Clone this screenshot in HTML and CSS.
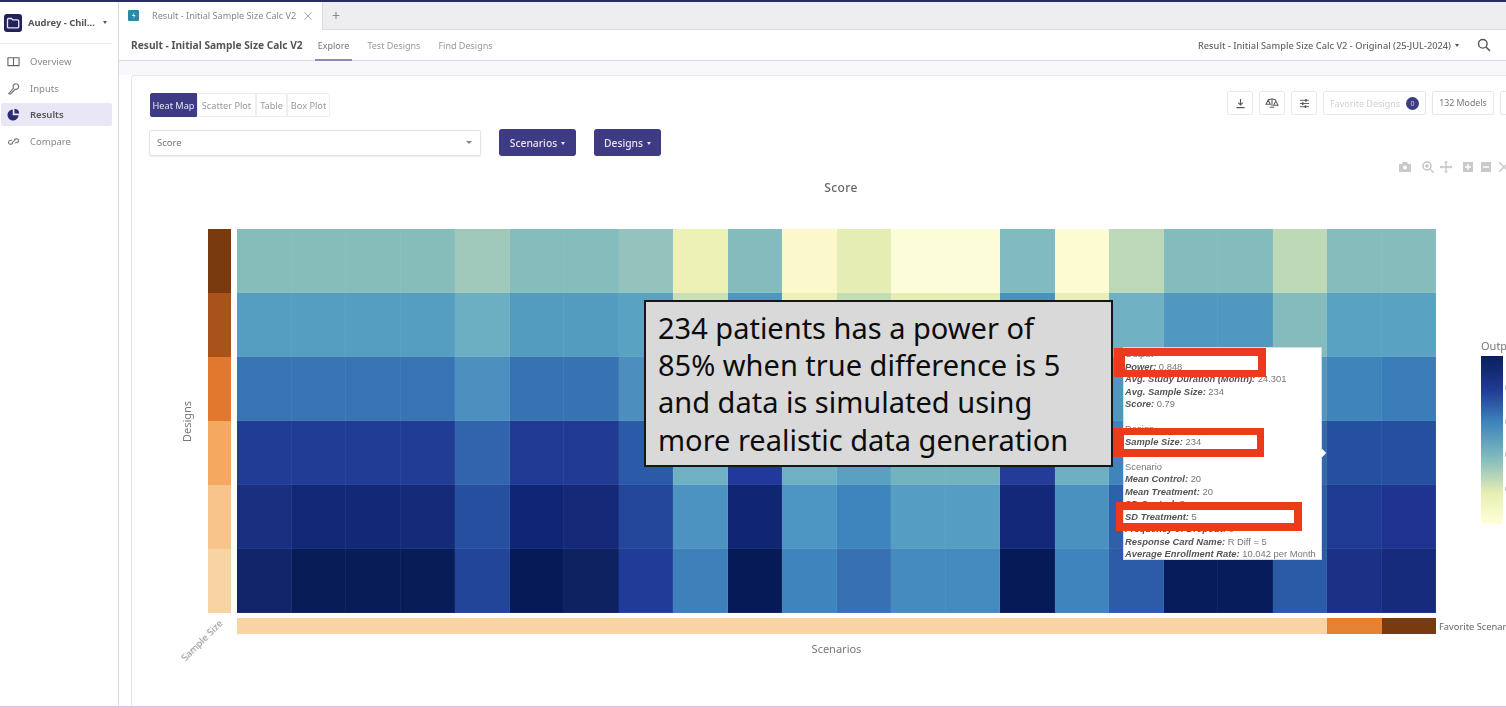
FILE: index.html
```html
<!DOCTYPE html>
<html lang="en">
<head>
<meta charset="utf-8">
<title>Result - Initial Sample Size Calc V2</title>
<link rel="stylesheet" href="styles.css">
</head>
<body>
<div class="app">
  <aside class="sidebar soft">
    <div class="workspace">
      <span class="logo"><svg viewBox="0 0 18 18" width="18" height="18"><rect width="18" height="18" rx="3" fill="#23215c"/><path d="M3.5 5.5q0-1 1-1h3l1.2 1.4h5q1 0 1 1v6q0 1-1 1h-9.200q-1 0-1-1z" fill="none" stroke="#e8e8f2" stroke-width="1.300"/></svg></span>
      <span class="workspace-name">Audrey - Chil...</span>
      <span class="caret dark"></span>
    </div>
    <nav class="nav">
      <a class="nav-item"><svg viewBox="0 0 14 14" width="13" height="13"><path d="M1 3h12v8.500H1zM7 3v8.500" fill="none" stroke="#666" stroke-width="1.200"/></svg>Overview</a>
      <a class="nav-item"><svg viewBox="0 0 14 14" width="13" height="13"><path d="M2 12.500l5-6a3 3 0 1 1 1.800 1.300l-5 5.200z" fill="none" stroke="#777" stroke-width="1.300"/></svg>Inputs</a>
      <a class="nav-item active"><svg viewBox="0 0 14 14" width="13" height="13"><path d="M6.200 1.500v6.300h6.300a6 6 0 1 1-6.300-6.300zM8 .8a5.500 5.500 0 0 1 5.200 5.200H8z" fill="#2f2b70"/></svg>Results</a>
      <a class="nav-item"><svg viewBox="0 0 14 14" width="13" height="13"><path d="M6 9H3.500a2 2 0 0 1 0-4H6M8 9h2.500a2 2 0 0 0 0-4H8M5 8l4-2" fill="none" stroke="#777" stroke-width="1.200" transform="rotate(-15 7 7)"/></svg>Compare</a>
    </nav>
  </aside>

  <main class="main">
    <div class="tabs soft">
      <div class="tab">
        <span class="tab-icon"><svg viewBox="0 0 11 11" width="11" height="11"><path d="M6.500 2L4 6h2l-1 3 2.500-4h-2z" fill="#dff"/></svg></span>
        <span class="tab-label">Result - Initial Sample Size Calc V2</span>
        <svg class="tab-close" viewBox="0 0 8 8" width="8" height="8"><path d="M.5.500l7 7M7.500.500l-7 7" stroke="#999" stroke-width=".9"/></svg>
      </div>
      <span class="tab-add">+</span>
    </div>

    <header class="titlebar soft">
      <h1 class="page-title">Result - Initial Sample Size Calc V2</h1>
      <a class="subnav current">Explore</a>
      <a class="subnav">Test Designs</a>
      <a class="subnav">Find Designs</a>
      <span class="version">Result - Initial Sample Size Calc V2 - Original (25-JUL-2024)<span class="caret dark small"></span></span>
      <svg class="search" viewBox="0 0 14 14" width="14" height="14"><circle cx="5.800" cy="5.800" r="4.300" fill="none" stroke="#555" stroke-width="1.400"/><path d="M9 9l4 4" stroke="#555" stroke-width="1.600"/></svg>
    </header>

    <div class="canvas">
      <section class="card">
        <div class="controls soft">
          <div class="controls-left">
            <div class="segments">
              <span class="segment on">Heat Map</span>
              <span class="segment wide">Scatter Plot</span>
              <span class="segment narrow">Table</span>
              <span class="segment last">Box Plot</span>
            </div>
            <div class="filters">
              <div class="select"><span>Score</span><span class="caret grey"></span></div>
              <button class="btn first">Scenarios<span class="caret light"></span></button>
              <button class="btn second">Designs<span class="caret light"></span></button>
            </div>
          </div>
          <div class="controls-right">
            <span class="tool"><svg viewBox="0 0 12 12" width="11" height="11"><path d="M6 1v6.500M3.500 5L6 7.500 8.500 5M1.500 10.500h9" fill="none" stroke="#555" stroke-width="1.200"/></svg></span>
            <span class="tool"><svg viewBox="0 0 16 14" width="14" height="12"><path d="M8 1.500v9M3.500 3.500L8 2l4.500 1.500M3.500 3.500L1 8.500h5zM12.500 4.500L10 9.500h5zM5.500 12h5" fill="none" stroke="#555" stroke-width="1.200"/></svg></span>
            <span class="tool"><svg viewBox="0 0 12 12" width="11" height="11"><path d="M1 2.500h10M1 6h10M1 9.500h10" stroke="#555" stroke-width="1"/><path d="M7.500 1v3M4 4.500v3M7 8v3" stroke="#555" stroke-width="1.600"/></svg></span>
            <span class="tool fav">Favorite Designs<span class="count">0</span></span>
            <span class="tool models">132 Models</span>
            <span class="tool clipped"></span>
          </div>
        </div>

        <div class="modebar soft">
          <svg viewBox="0 0 12 10" width="12" height="10"><path d="M0 2h3l1-2h4l1 2h3v8H0z" fill="#c9c9c9"/><circle cx="6" cy="5.500" r="2" fill="#fff"/></svg>
          <svg class="gap-l" viewBox="0 0 12 12" width="12" height="12"><circle cx="5" cy="5" r="4" fill="none" stroke="#c4c4c4" stroke-width="1.500"/><path d="M8 8l4 4M3 5h4M5 3v4" stroke="#c4c4c4" stroke-width="1.300"/></svg>
          <svg class="gap-s" viewBox="0 0 12 12" width="12" height="12"><path d="M6 0v12M0 6h12" stroke="#c4c4c4" stroke-width="1.300"/><path d="M4.500 2L6 .5 7.500 2M4.500 10L6 11.500 7.500 10M2 4.500L.5 6 2 7.500M10 4.500L11.500 6 10 7.500" fill="none" stroke="#c4c4c4"/></svg>
          <svg class="gap-l" viewBox="0 0 10 10" width="10" height="10"><rect width="10" height="10" fill="#c9c9c9"/><path d="M5 2v6M2 5h6" stroke="#fff" stroke-width="1.400"/></svg>
          <svg class="gap-m" viewBox="0 0 10 10" width="10" height="10"><rect width="10" height="10" fill="#c9c9c9"/><path d="M2 5h6" stroke="#fff" stroke-width="1.400"/></svg>
          <svg class="gap-m" viewBox="0 0 10 10" width="10" height="10"><path d="M0 0l5 5-5 5M10 0L5 5l5 5" fill="none" stroke="#c9c9c9" stroke-width="1.400"/></svg>
        </div>

        <h2 class="chart-title soft">Score</h2>

        <div class="chart">
          <div class="axis-designs soft"><span>Designs</span></div>
          <div class="design-bar soft">
            <i class="d1"></i><i class="d2"></i><i class="d3"></i><i class="d4"></i><i class="d5"></i><i class="d6"></i>
          </div>
          <div class="plot">
            <div class="heatmap soft">
              <i style="background:#86bdbb"></i><i style="background:#86bdbb"></i><i style="background:#86bdbb"></i><i style="background:#86bdbb"></i><i style="background:#9fc8ba"></i><i style="background:#85bcbc"></i><i style="background:#85bcbc"></i><i style="background:#93c3bc"></i><i style="background:#eef1b5"></i><i style="background:#84bcbe"></i><i style="background:#fbf9cb"></i><i style="background:#e5ecb4"></i><i style="background:#fdfcd8"></i><i style="background:#fdfcd8"></i><i style="background:#82bbbf"></i><i style="background:#fdfbd2"></i><i style="background:#bcd8b8"></i><i style="background:#84bcbe"></i><i style="background:#84bcbe"></i><i style="background:#bdd9b6"></i><i style="background:#86bcbc"></i><i style="background:#86bcbc"></i>
              <i style="background:#559dc1"></i><i style="background:#559dc1"></i><i style="background:#559dc1"></i><i style="background:#559dc1"></i><i style="background:#6cafc3"></i><i style="background:#539cc0"></i><i style="background:#539cc0"></i><i style="background:#5aa2c1"></i><i style="background:#c9dfb5"></i><i style="background:#4f97bf"></i><i style="background:#ecf0b8"></i><i style="background:#c5ddb4"></i><i style="background:#e6eeb5"></i><i style="background:#e6eeb5"></i><i style="background:#4793bf"></i><i style="background:#e8efb6"></i><i style="background:#6fb0c3"></i><i style="background:#5098c0"></i><i style="background:#5098c0"></i><i style="background:#84bcbe"></i><i style="background:#5aa2c1"></i><i style="background:#5aa2c1"></i>
              <i style="background:#3873b3"></i><i style="background:#3873b3"></i><i style="background:#3873b3"></i><i style="background:#3873b3"></i><i style="background:#4c90c0"></i><i style="background:#3773b2"></i><i style="background:#3773b2"></i><i style="background:#4c8fbf"></i><i style="background:#84bcbe"></i><i style="background:#2f60aa"></i><i style="background:#84bcbe"></i><i style="background:#6fb0c3"></i><i style="background:#84bcbe"></i><i style="background:#84bcbe"></i><i style="background:#2f60aa"></i><i style="background:#84bcbe"></i><i style="background:#4f97bf"></i><i style="background:#3873b3"></i><i style="background:#3873b3"></i><i style="background:#4f97bf"></i><i style="background:#3f85bc"></i><i style="background:#3b7db8"></i>
              <i style="background:#203c95"></i><i style="background:#203c95"></i><i style="background:#203c95"></i><i style="background:#203c95"></i><i style="background:#3164ac"></i><i style="background:#213b94"></i><i style="background:#213b94"></i><i style="background:#2b5aa8"></i><i style="background:#6fb0c3"></i><i style="background:#22389a"></i><i style="background:#6fb1c3"></i><i style="background:#5aa1c1"></i><i style="background:#72b3be"></i><i style="background:#72b3be"></i><i style="background:#243c98"></i><i style="background:#6eb0c2"></i><i style="background:#3f85bc"></i><i style="background:#213b94"></i><i style="background:#213b94"></i><i style="background:#3366ad"></i><i style="background:#25509f"></i><i style="background:#25509f"></i>
              <i style="background:#1a2f80"></i><i style="background:#112876"></i><i style="background:#132877"></i><i style="background:#152b7a"></i><i style="background:#26509f"></i><i style="background:#102575"></i><i style="background:#152978"></i><i style="background:#24479c"></i><i style="background:#4d93c1"></i><i style="background:#102672"></i><i style="background:#4d95c2"></i><i style="background:#3f85bd"></i><i style="background:#559dc2"></i><i style="background:#559dc2"></i><i style="background:#132878"></i><i style="background:#4a91c0"></i><i style="background:#2f60aa"></i><i style="background:#132878"></i><i style="background:#132878"></i><i style="background:#2b5ca8"></i><i style="background:#1f3a92"></i><i style="background:#1f3490"></i>
              <i style="background:#12256b"></i><i style="background:#081c58"></i><i style="background:#081c58"></i><i style="background:#081c58"></i><i style="background:#224599"></i><i style="background:#061a58"></i><i style="background:#0e2160"></i><i style="background:#213c98"></i><i style="background:#3d80ba"></i><i style="background:#061a58"></i><i style="background:#3f84bc"></i><i style="background:#3871b3"></i><i style="background:#458bc0"></i><i style="background:#458bc0"></i><i style="background:#061a58"></i><i style="background:#3f84bc"></i><i style="background:#2c5ca8"></i><i style="background:#071c5b"></i><i style="background:#071c5b"></i><i style="background:#2b5aa6"></i><i style="background:#1b3186"></i><i style="background:#172b7c"></i>
            </div>
            <div class="scenario-bar soft"><i class="fill"></i><i class="s2"></i><i class="s3"></i></div>
            <div class="axis-scenarios soft">Scenarios</div>

            <div class="tooltip soft">
              <p>Output</p>
              <p><b>Power:</b> 0.848</p>
              <p><b>Avg. Study Duration (Month):</b> 24.301</p>
              <p><b>Avg. Sample Size:</b> 234</p>
              <p><b>Score:</b> 0.79</p>
              <p>&nbsp;</p>
              <p>Design</p>
              <p><b>Sample Size:</b> 234</p>
              <p>&nbsp;</p>
              <p>Scenario</p>
              <p><b>Mean Control:</b> 20</p>
              <p><b>Mean Treatment:</b> 20</p>
              <p><b>SD Control:</b> 5</p>
              <p><b>SD Treatment:</b> 5</p>
              <p><b>Frequency of Dropout:</b> 0</p>
              <p><b>Response Card Name:</b> R Diff = 5</p>
              <p><b>Average Enrollment Rate:</b> 10.042 per Month</p>
              <span class="tooltip-arrow"></span>
            </div>
            <span class="mark mark-power"></span>
            <span class="mark mark-size"></span>
            <span class="mark mark-sd"></span>
            <div class="callout">234 patients has a power of<br>85% when true difference is 5<br>and data is simulated using<br>more realistic data generation</div>
          </div>
          <div class="legend soft">
            <span class="legend-title">Output</span>
            <div class="legend-body">
              <div class="legend-ramp"></div>
              <div class="legend-ticks"><span>0.8</span><span>0.6</span><span>0.4</span><span>0.2</span></div>
            </div>
          </div>
          <span class="fav-label soft">Favorite Scenario</span>
          <span class="axis-sample soft">Sample Size</span>
        </div>
      </section>
    </div>
  </main>
</div>
</body>
</html>
```

FILE: styles.css
```css
* { box-sizing: border-box; }
html, body { margin: 0; height: 708px; overflow: hidden; background: #fff; }
body { font-family: "Noto Sans", "Open Sans", sans-serif; color: #666; }
.soft { filter: blur(0.45px); }

.app {
  display: flex;
  height: 708px;
  border-top: 2px solid #2b2a63;
  border-bottom: 2px solid #e9bfe2;
  overflow: hidden;
}

/* sidebar */
.sidebar {
  flex: 0 0 119px;
  border-right: 1px solid #d9d9e6;
  padding-right: 6px;
}
.workspace {
  display: flex;
  align-items: center;
  height: 42px;
  padding: 0 0 0 4px;
  border-bottom: 1px solid #eeeef2;
}
.logo { display: flex; margin-right: 6px; }
.workspace-name { font-size: 9.400px; font-weight: 700; color: #555; white-space: nowrap; }
.caret {
  display: inline-block;
  border-left: 2.500px solid transparent;
  border-right: 2.500px solid transparent;
  border-top: 3px solid #555;
}
.caret.dark { margin-left: 8px; }
.caret.small { margin-left: 4px; vertical-align: 2px; }
.caret.grey { border-top-color: #888; border-left-width: 3.500px; border-right-width: 3.500px; }
.caret.light { border-top-color: #e8e6f6; margin-left: 4px; vertical-align: 2px; }
.nav { display: flex; flex-direction: column; padding-top: 6px; gap: 3.500px; }
.nav-item {
  display: flex;
  align-items: center;
  gap: 10px;
  height: 23px;
  padding-left: 6px;
  margin-left: 1px;
  font-size: 9.500px;
  color: #888;
  border-radius: 2px;
}
.nav-item.active { background: #e9e7f5; color: #555; font-weight: 600; }

/* main */
.main { flex: 1; min-width: 0; display: flex; flex-direction: column; }
.tabs {
  display: flex;
  align-items: center;
  height: 28px;
  background: #eeeef1;
  border-bottom: 1px solid #dcdce6;
}
.tab {
  display: flex;
  align-items: center;
  width: 204px;
  height: 28px;
  padding-left: 9px;
  background: #fff;
  border-right: 1px solid #d9d9e0;
}
.tab-icon { display: flex; width: 11px; height: 11px; border-radius: 1px; background: #2f88a8; margin-right: 13px; }
.tab-label { font-size: 9.100px; color: #888; white-space: nowrap; }
.tab-close { margin-left: 8px; }
.tab-add { margin-left: 9px; font-size: 14px; color: #888; line-height: 1; }

.titlebar {
  display: flex;
  align-items: center;
  height: 31px;
  padding-left: 12px;
  border-bottom: 1px solid #d9d9e6;
  background: #fff;
}
.page-title { margin: 0 15px 0 0; font-size: 10.200px; font-weight: 700; color: #555; white-space: nowrap; }
.subnav { position: relative; font-size: 9px; color: #999; margin-right: 18px; white-space: nowrap; line-height: 31px; height: 30px; }
.subnav.current { color: #777; }
.subnav.current::after {
  content: "";
  position: absolute;
  left: -3px;
  right: -3px;
  bottom: -1px;
  height: 2px;
  background: #8f88b8;
}
.version { margin-left: auto; font-size: 9.250px; font-weight: 500; color: #666; white-space: nowrap; }
.search { margin: 0 15px 0 18px; }

.canvas { flex: 1; min-height: 0; padding: 14px 0 0 12px; background: linear-gradient(#f8f8fc 14px, #fff 14px); }
.card {
  width: 1400px;
  height: 640px;
  padding: 17px 0 0 18px;
  background: #fff;
  border: 1px solid #e5e5ee;
  border-radius: 3px;
}

/* controls */
.controls { display: flex; justify-content: space-between; height: 64px; margin-right: 24px; }
.controls-right { display: flex; gap: 6px; width: 279px; height: 24px; margin-top: -2px; white-space: nowrap; overflow: hidden; flex: none; }
.segments { display: flex; height: 24px; }
.segment {
  display: flex;
  align-items: center;
  justify-content: center;
  width: 43px;
  font-size: 9.200px;
  color: #999;
  border: 1px solid #eeeef2;
  white-space: nowrap;
}
.segment.on { width: 47px; background: #3f3a84; color: #e6e4f4; border-radius: 2px 0 0 2px; border-color: #3f3a84; }
.segment.wide { width: 59px; }
.segment.narrow { width: 31px; }
.segment.last { border-radius: 0 2px 2px 0; }
.filters { display: flex; align-items: center; margin: 12px 0 0 -1px; }
.select {
  display: flex;
  align-items: center;
  justify-content: space-between;
  width: 332px;
  height: 26px;
  padding: 0 8px 0 7px;
  font-size: 9.500px;
  color: #777;
  border: 1px solid #e2e2e8;
  border-radius: 2px;
  box-shadow: 0 1px 2px #eee;
}
.btn {
  height: 27px;
  font: 500 10.300px "Noto Sans", sans-serif;
  color: #e6e4f4;
  background: #3f3a84;
  border: 0;
  border-radius: 3px;
}
.btn.first { width: 77px; margin-left: 18px; }
.btn.second { width: 67px; margin-left: 18px; }
.tool {
  display: flex;
  align-items: center;
  justify-content: center;
  flex: none;
  width: 26px;
  height: 24px;
  border: 1px solid #e6e6ec;
  border-radius: 2px;
  box-shadow: 0 1px 1px #f1f1f1;
}
.tool.fav { width: 103px; font-size: 9px; color: #cfcfd6; gap: 6px; }
.count {
  display: flex;
  align-items: center;
  justify-content: center;
  width: 13px;
  height: 13px;
  border-radius: 50%;
  background: #3f3a84;
  color: #cfcde8;
  font-size: 7px;
}
.tool.models { width: 62px; font-size: 8.800px; color: #777; }
.tool.clipped { width: 20px; }

.modebar { display: flex; align-items: center; justify-content: flex-end; width: 1359px; height: 20px; overflow: hidden; flex: none; }
.gap-l { margin-left: 11px; }
.gap-s { margin-left: 6px; }
.gap-m { margin-left: 8px; }

.chart-title {
  width: 1382px;
  height: 49px;
  margin: 3px 0 0;
  text-align: center;
  font-size: 12px;
  font-weight: 500;
  letter-spacing: .4px;
  color: #666;
  line-height: 16px;
}

/* chart */
.chart { position: relative; display: flex; align-items: flex-start; }
.axis-designs {
  display: flex;
  flex: none;
  align-items: center;
  justify-content: center;
  width: 40px;
  height: 384px;
  margin-left: 17px;
  font-size: 11px;
  color: #777;
}
.axis-designs span { transform: rotate(-90deg); white-space: nowrap; }
.design-bar { display: grid; flex: none; grid-template-rows: repeat(6, 64px); width: 23px; margin-left: 1px; }
.d1 { background: #7a3a10; }
.d2 { background: #a9531b; }
.d3 { background: #e2782d; }
.d4 { background: #f5a860; }
.d5 { background: #f8c48c; }
.d6 { background: #f8d3a3; }

.plot { position: relative; width: 1199px; margin-left: 6px; flex: none; }
.heatmap {
  display: grid;
  grid-template-columns: repeat(22, 54.500px);
  grid-template-rows: repeat(6, 64px);
  filter: blur(0.3px);
}
.heatmap i { box-shadow: inset -1px -1px 0 rgba(255, 255, 255, .05); }
.scenario-bar { display: flex; height: 16px; margin-top: 5px; }
.scenario-bar .fill { flex: 1; background: #f8d3a3; }
.scenario-bar .s2 { width: 54.500px; background: #e58133; }
.scenario-bar .s3 { width: 54.500px; background: #7a3a10; }
.axis-scenarios { margin-top: 7px; text-align: center; font-size: 11px; color: #777; }

.legend { width: 70px; margin-left: 45px; margin-top: 110px; flex: none; }
.legend-title { display: block; font-size: 11px; color: #777; line-height: 13px; height: 17px; }
.legend-body { display: flex; }
.legend-ramp {
  width: 22px;
  height: 168px;
  background: linear-gradient(#0a1f5c 0%, #1f3a94 20%, #3f85bc 40%, #7fb9bd 60%, #e8efb4 82%, #ffffd9 100%);
}
.legend-ticks {
  display: flex;
  flex-direction: column;
  gap: 20.500px;
  margin: 25px 0 0 2px;
  font-size: 9.500px;
  color: #888;
  line-height: 13px;
}

.fav-label { position: absolute; left: 1289px; top: 391px; font-size: 9.300px; color: #666; white-space: nowrap; }
.axis-sample { position: absolute; left: 25px; top: 405px; font-size: 9.600px; color: #888; white-space: nowrap; transform: rotate(-45deg); }

/* overlays */
.tooltip {
  position: absolute;
  left: 886px;
  top: 118px;
  width: 199px;
  height: 213px;
  padding: 0 0 0 1px;
  background: #fff;
  border: 1px solid #ddd;
  font: 9.400px/12.500px "Liberation Sans", Arial, sans-serif;
  color: #777;
  white-space: nowrap;
}
.tooltip p { margin: 0; }
.tooltip b { font-style: italic; color: #555; }
.tooltip-arrow {
  position: absolute;
  right: -4px;
  top: 102px;
  width: 6px;
  height: 6px;
  background: #fff;
  transform: rotate(45deg);
}
.mark { position: absolute; border-style: solid; border-color: #ee3a1c; }
.mark-power { left: 877px; top: 119px; width: 152px; height: 29px; border-width: 8px 8px 7px 11px; }
.mark-size { left: 876px; top: 199px; width: 151px; height: 29px; border-width: 7px 7px 8px 11px; }
.mark-sd { left: 879px; top: 273px; width: 186px; height: 29px; border-width: 8px 8px 8px 7px; }
.callout {
  position: absolute;
  left: 407px;
  top: 71px;
  width: 469px;
  height: 167px;
  padding: 7px 0 0 12px;
  background: #d9d9d9;
  border: 2px solid #161616;
  font-family: "Noto Sans", "Open Sans", sans-serif;
  font-size: 29px;
  line-height: 37.200px;
  color: #0c0c0c;
  white-space: nowrap;
}
```
